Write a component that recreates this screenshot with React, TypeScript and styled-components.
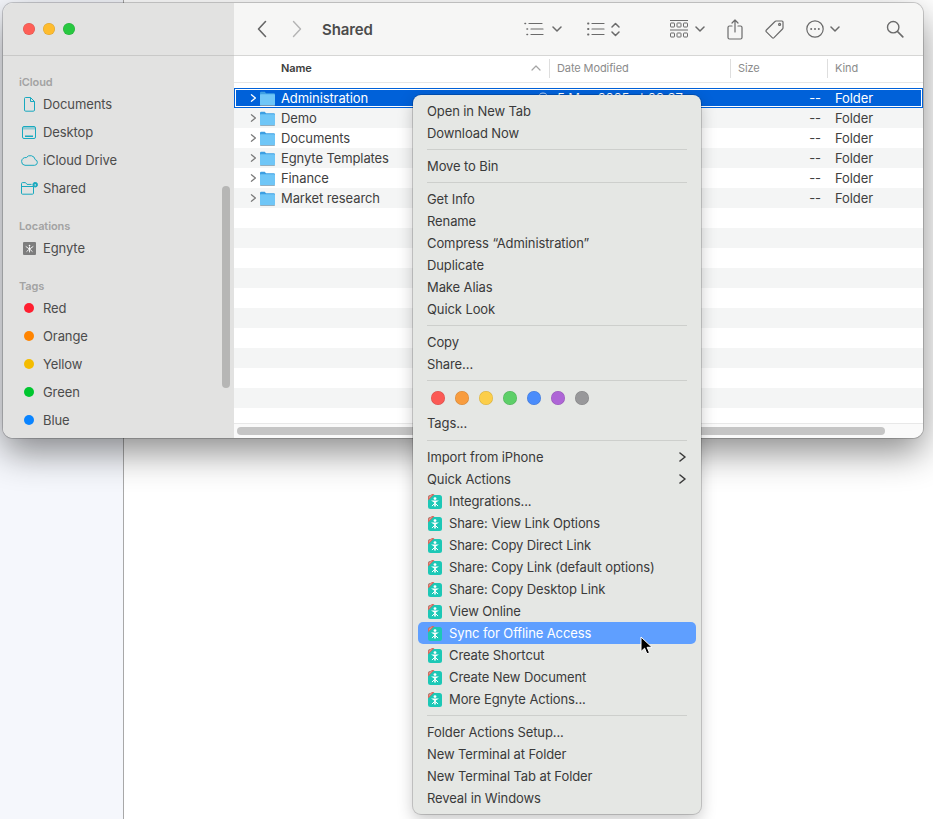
import React from 'react'
import { createGlobalStyle, styled } from 'styled-components'

const FONT = `Inter, "Liberation Sans", Arial, sans-serif`

const GlobalStyle = createGlobalStyle`
  html, body {
    margin: 0;
    padding: 0;
    background: #fff;
    font-family: ${FONT};
    letter-spacing: -0.1px;
    -webkit-font-smoothing: antialiased;
  }
  * { box-sizing: border-box; }
`

const Page = styled.div`
  position: relative;
  display: flex;
  width: 933px;
  height: 819px;
  overflow: hidden;
  background: #fff;
`

const BackPane = styled.div`
  width: 124px;
  height: 100%;
  border-right: 1px solid #a8a8a8;
  background: #f5f7fc;
`

const Window = styled.div`
  position: absolute;
  top: 3px;
  left: 3px;
  display: flex;
  width: 920px;
  height: 435px;
  overflow: hidden;
  border-radius: 10px;
  background: #fff;
  box-shadow: 0 0 0 1px rgba(0, 0, 0, 0.18), 0 14px 36px rgba(0, 0, 0, 0.46);
`

const Sidebar = styled.aside`
  position: relative;
  flex: 0 0 231px;
  overflow: hidden;
  background: #e2e2e1;
`

const TitleBar = styled.div`
  display: flex;
  align-items: center;
  gap: 8px;
  height: 53px;
  padding-left: 20px;
  border-bottom: 1px solid #c9c9c8;
`

const Light = styled.span<{ $color: string }>`
  width: 12px;
  height: 12px;
  border-radius: 50%;
  background: ${(props) => props.$color};
  box-shadow: inset 0 0 0 0.5px rgba(0, 0, 0, 0.15);
`

const SideContent = styled.div`
  padding-top: 18px;
`

const SideLabel = styled.div`
  height: 16px;
  margin-top: 16px;
  padding-left: 16px;
  color: #a3a3a3;
  font-size: 11px;
  font-weight: 600;
  line-height: 16px;

  &:first-child {
    margin-top: 0;
  }
`

const SideRow = styled.div`
  display: flex;
  align-items: center;
  height: 28px;
  color: #4c4c4c;
  font-size: 13px;
`

const SideIcon = styled.span`
  display: flex;
  flex: 0 0 40px;
  justify-content: center;
  padding-left: 12px;
`

const TagDot = styled.span<{ $color: string }>`
  width: 10px;
  height: 10px;
  border-radius: 50%;
  background: ${(props) => props.$color};
`

const SideScroll = styled.div`
  position: absolute;
  top: 183px;
  left: 219px;
  width: 8px;
  height: 202px;
  border-radius: 4px;
  background: #b6b6b5;
`

const Main = styled.main`
  display: flex;
  flex: 1;
  flex-direction: column;
  min-width: 0;
`

const Toolbar = styled.div`
  display: flex;
  align-items: center;
  flex: 0 0 53px;
  padding: 0 19px 0 23px;
  border-bottom: 1px solid #d6d6d5;
  background: #f6f6f5;
`

const NavButton = styled.span<{ $ml?: number }>`
  display: flex;
  margin-left: ${(props) => props.$ml ?? 0}px;
`

const Title = styled.div`
  flex: 1;
  margin-left: 20px;
  color: #4c4c4c;
  font-size: 15px;
  font-weight: 600;
`

const Tool = styled.span<{ $ml: number; $gap?: number }>`
  display: flex;
  align-items: center;
  gap: ${(props) => props.$gap ?? 7}px;
  margin-left: ${(props) => props.$ml}px;
`

const HeaderRow = styled.div`
  display: grid;
  grid-template-columns: 315px 181px 97px 1fr;
  flex: 0 0 27px;
  border-bottom: 1px solid #e6e6e6;
  background: #fff;
`

const HeaderCell = styled.div<{ $main?: boolean }>`
  display: flex;
  align-items: center;
  justify-content: space-between;
  height: 19px;
  margin-top: 3px;
  padding: ${(props) => (props.$main ? '0 8px 2px 47px' : '0 0 2px 7px')};
  border-left: ${(props) => (props.$main ? 'none' : '1px solid #dedede')};
  color: ${(props) => (props.$main ? '#3d3d3d' : '#8b8b8b')};
  font-size: 11px;
  font-weight: ${(props) => (props.$main ? 600 : 400)};
`

const Rows = styled.div`
  flex: 1;
  min-height: 0;
  overflow: hidden;
  padding-top: 5px;
`

const Row = styled.div<{ $selected?: boolean; $striped?: boolean }>`
  display: grid;
  grid-template-columns: 315px 181px 97px 1fr;
  align-items: center;
  height: 20px;
  background: ${(props) => (props.$selected ? '#0061d9' : props.$striped ? '#f4f5f5' : '#fff')};
  box-shadow: ${(props) => (props.$selected ? 'inset 0 0 0 1px #0061d9, inset 0 0 0 2px #fff' : 'none')};
  color: ${(props) => (props.$selected ? '#fff' : '#3f3f3f')};
  font-size: 13px;
`

const NameCell = styled.div`
  display: flex;
  align-items: center;
  gap: 3px;
  padding-left: 15px;
`

const RowName = styled.span`
  flex: 1;
  margin-left: 3px;
`

const DateCell = styled.div`
  padding-left: 8px;
  white-space: nowrap;
`

const SizeCell = styled.div`
  padding-right: 6px;
  text-align: right;
`

const KindCell = styled.div`
  padding-left: 8px;
`

const ScrollTrack = styled.div`
  flex: 0 0 14px;
  padding: 3px;
  border-top: 1px solid #e8e8e8;
  background: #fafafa;
`

const ScrollThumb = styled.div`
  width: 648px;
  height: 8px;
  border-radius: 4px;
  background: #c5c5c5;
`

const Menu = styled.div`
  position: absolute;
  top: 95px;
  left: 413px;
  width: 288px;
  height: 719px;
  padding: 5px 0;
  border-radius: 8px;
  background: #e5e7e4;
  box-shadow: 0 0 0 1px rgba(0, 0, 0, 0.17), 0 6px 16px rgba(0, 0, 0, 0.22);
`

const MenuRow = styled.div<{ $active?: boolean }>`
  display: flex;
  align-items: center;
  height: 22px;
  margin: 0 5px;
  padding: 0 9px;
  border-radius: 5px;
  background: ${(props) => (props.$active ? '#5f9fff' : 'transparent')};
  color: ${(props) => (props.$active ? '#fff' : '#3a3a3a')};
  font-size: 13px;
`

const MenuText = styled.span`
  flex: 1;
  white-space: nowrap;
`

const MenuIcon = styled.span`
  display: flex;
  flex: 0 0 22px;
  padding-left: 1px;
`

const Separator = styled.div<{ $wide?: boolean }>`
  height: 1px;
  margin: ${(props) => (props.$wide ? '6px' : '5px')} 14px 5px;
  background: #cdcfcc;
`

const ColorRow = styled.div`
  display: flex;
  align-items: center;
  gap: 10px;
  height: 26px;
  padding: 0 0 2px 18px;
`

const ColorDot = styled.span<{ $color: string }>`
  width: 14px;
  height: 14px;
  border-radius: 50%;
  background: ${(props) => props.$color};
  box-shadow: inset 0 0 0 0.5px rgba(0, 0, 0, 0.15);
`

const Cursor = styled.svg`
  position: absolute;
  top: 636px;
  left: 640px;
`

const GLYPH = '#6b6b6b'
const TEAL = '#19a9bf'

const Chevron: React.FC<{ dir: 'left' | 'right' | 'down' | 'up'; color?: string; size?: number; width?: number }> = ({
  dir,
  color = GLYPH,
  size = 10,
  width = 1.5,
}) => {
  const paths = {
    left: 'M7 1 2 5l5 4',
    right: 'M3 1l5 4-5 4',
    down: 'M1 3l4 4 4-4',
    up: 'M1 7l4-4 4 4',
  }
  return (
    <svg width={size} height={size} viewBox="0 0 10 10" fill="none">
      <path d={paths[dir]} stroke={color} strokeWidth={width} strokeLinecap="round" strokeLinejoin="round" />
    </svg>
  )
}

const BackIcon: React.FC<{ color: string }> = ({ color }) => (
  <svg width="10" height="18" viewBox="0 0 10 18" fill="none">
    <path d="M8.5 1.5 1.5 9l7 7.5" stroke={color} strokeWidth="1.6" strokeLinecap="round" strokeLinejoin="round" />
  </svg>
)

const ForwardIcon: React.FC<{ color: string }> = ({ color }) => (
  <svg width="10" height="18" viewBox="0 0 10 18" fill="none">
    <path d="M1.5 1.5 8.5 9l-7 7.5" stroke={color} strokeWidth="1.4" strokeLinecap="round" strokeLinejoin="round" />
  </svg>
)

const GroupListIcon = () => (
  <svg width="20" height="14" viewBox="0 0 20 14" fill="none" stroke={GLYPH} strokeLinecap="round">
    <path d="M5 1.5h13M7 7h12M7 12.5h12" strokeWidth="1.2" />
    <path d="M1 1.5h.5M3 7h.5M3 12.5h.5" strokeWidth="1.6" />
  </svg>
)

const ListIcon = () => (
  <svg width="18" height="14" viewBox="0 0 18 14" fill="none" stroke={GLYPH} strokeLinecap="round">
    <path d="M5 1.5h12M5 7h12M5 12.5h12" strokeWidth="1.2" />
    <path d="M1 1.5h.5M1 7h.5M1 12.5h.5" strokeWidth="1.8" />
  </svg>
)

const UpDownIcon = () => (
  <svg width="9" height="15" viewBox="0 0 9 15" fill="none" stroke={GLYPH} strokeWidth="1.5" strokeLinecap="round" strokeLinejoin="round">
    <path d="M1 5l3.5-3.5L8 5M1 10l3.5 3.5L8 10" />
  </svg>
)

const GalleryIcon = () => (
  <svg width="18" height="18" viewBox="0 0 18 18" fill="none" stroke={GLYPH} strokeWidth="1">
    <path d="M0 .5h18M0 10h18" />
    <rect x=".5" y="3" width="4" height="4" rx=".5" />
    <rect x="7" y="3" width="4" height="4" rx=".5" />
    <rect x="13.5" y="3" width="4" height="4" rx=".5" />
    <rect x=".5" y="13" width="4" height="4" rx=".5" />
    <rect x="7" y="13" width="4" height="4" rx=".5" />
    <rect x="13.5" y="13" width="4" height="4" rx=".5" />
  </svg>
)

const ShareIcon = () => (
  <svg width="16" height="21" viewBox="0 0 16 21" fill="none" stroke={GLYPH} strokeWidth="1.2" strokeLinecap="round" strokeLinejoin="round">
    <path d="M5 7H2.5A1.5 1.5 0 0 0 1 8.5v10A1.5 1.5 0 0 0 2.5 20h11a1.5 1.5 0 0 0 1.5-1.5v-10A1.5 1.5 0 0 0 13.5 7H11" />
    <path d="M8 13V1.2M5 4l3-3 3 3" />
  </svg>
)

const TagIcon = () => (
  <svg width="20" height="20" viewBox="0 0 20 20" fill="none" stroke={GLYPH} strokeWidth="1.2" strokeLinejoin="round">
    <path d="M11 2h6a1 1 0 0 1 1 1v6a1.5 1.5 0 0 1-.5 1L9 18.6a1.3 1.3 0 0 1-1.8 0L1.4 12.8a1.3 1.3 0 0 1 0-1.8L10 2.5A1.5 1.5 0 0 1 11 2Z" />
    <circle cx="14.6" cy="5.4" r="1" />
  </svg>
)

const MoreIcon = () => (
  <svg width="18" height="18" viewBox="0 0 18 18" fill="none">
    <circle cx="9" cy="9" r="8.2" stroke={GLYPH} strokeWidth="1.2" />
    <circle cx="5.2" cy="9" r="1" fill={GLYPH} />
    <circle cx="9" cy="9" r="1" fill={GLYPH} />
    <circle cx="12.8" cy="9" r="1" fill={GLYPH} />
  </svg>
)

const SearchIcon = () => (
  <svg width="18" height="18" viewBox="0 0 18 18" fill="none" stroke={GLYPH} strokeWidth="1.4" strokeLinecap="round">
    <circle cx="7.2" cy="7.2" r="5.7" />
    <path d="M11.5 11.5 16.8 16.8" strokeWidth="1.7" />
  </svg>
)

const DocIcon = () => (
  <svg width="11" height="15" viewBox="0 0 11 15" fill="none" stroke={TEAL} strokeWidth="1" strokeLinejoin="round">
    <path d="M1.5.5h5l4 4v8.5a1.2 1.2 0 0 1-1.2 1.2H1.7A1.2 1.2 0 0 1 .5 13V1.5a1 1 0 0 1 1-1Z" />
    <path d="M6.5.5v4h4" />
  </svg>
)

const DesktopIcon = () => (
  <svg width="14" height="13" viewBox="0 0 14 13" fill="none">
    <rect x=".5" y=".5" width="13" height="12" rx="1.5" stroke={TEAL} />
    <path d="M1 1h12v2.5H1z" fill={TEAL} opacity=".4" />
    <path d="M3 9.5h8V11H3z" fill={TEAL} />
  </svg>
)

const CloudIcon = () => (
  <svg width="17" height="12" viewBox="0 0 17 12" fill="none" stroke={TEAL} strokeWidth="1" strokeLinejoin="round">
    <path d="M4 11.3h9.6a2.9 2.9 0 0 0 .6-5.7A5 5 0 0 0 5.3 3.6 3.9 3.9 0 0 0 .6 7.5 3.8 3.8 0 0 0 4 11.3Z" />
  </svg>
)

const SharedIcon = () => (
  <svg width="17" height="13" viewBox="0 0 17 13" fill="none" stroke={TEAL} strokeWidth="1" strokeLinejoin="round">
    <path d="M.5 4v7.2a1 1 0 0 0 1 1h10a1 1 0 0 0 1-1V4.5H.5Zm0 0V1.6a1 1 0 0 1 1-1h3l1.5 1.8h4.5" />
    <circle cx="14.2" cy="2.7" r="2.3" fill={TEAL} />
    <path d="M14.2 2v1.8" stroke="#e2e2e1" />
  </svg>
)

const EgnyteMark = () => (
  <svg width="13" height="13" viewBox="0 0 13 13">
    <rect width="13" height="13" rx="1" fill="#7d7d7d" />
    <circle cx="6.5" cy="3.6" r=".8" fill="#fff" />
    <path d="M6.5 5v5M3 4.6l2.8 2M10 4.6 7.2 6.6M3.8 9.4 6 7.4M9.2 9.4 7 7.4" stroke="#fff" strokeWidth=".9" strokeLinecap="round" />
  </svg>
)

const FolderIcon = () => (
  <svg width="15" height="15" viewBox="0 0 15 15">
    <path d="M0 2a1.2 1.2 0 0 1 1.2-1.2h3.6L6 2.2h7.8A1.2 1.2 0 0 1 15 3.4v2H0Z" fill="#3d9fe2" />
    <path d="M0 4a.8.8 0 0 1 .8-.8h13.4a.8.8 0 0 1 .8.8v9.4a1 1 0 0 1-1 1H1a1 1 0 0 1-1-1Z" fill="#6fc6f7" />
    <path d="M0 14h15v.2a.8.8 0 0 1-.8.8H.8a.8.8 0 0 1-.8-.8Z" fill="#8a9aa5" opacity=".7" />
  </svg>
)

const EgnyteBadge = () => (
  <svg width="14" height="15" viewBox="0 0 14 15">
    <rect y="1" width="14" height="14" rx="2.5" fill="#1cc8b6" />
    <path d="M0 6V3.5A2.5 2.5 0 0 1 2.5 1L4 0h2.5L0 6.5Z" fill="#d9695f" />
    <path d="M1 3.6 3.6 1.2" stroke="#f3d6d0" strokeWidth=".6" />
    <circle cx="7" cy="4.6" r="1.4" fill="#fff" />
    <path d="M3 6.6h8L7.8 8.6v4H6.2v-4Z" fill="#fff" />
    <path d="M4.2 11.8 6.4 9.6M9.8 11.8 7.6 9.6" stroke="#fff" strokeWidth="1" strokeLinecap="round" />
  </svg>
)

const StatusIcon = () => (
  <svg width="12" height="12" viewBox="0 0 12 12" fill="none" stroke="#b8cff2" strokeWidth="1">
    <circle cx="6" cy="6" r="5" />
  </svg>
)

const ICLOUD: [string, React.ReactNode][] = [
  ['Documents', <DocIcon key="d" />],
  ['Desktop', <DesktopIcon key="k" />],
  ['iCloud Drive', <CloudIcon key="c" />],
  ['Shared', <SharedIcon key="s" />],
]

const TAGS: [string, string][] = [
  ['Red', '#ff1f30'],
  ['Orange', '#ff8400'],
  ['Yellow', '#f4bc00'],
  ['Green', '#00c62f'],
  ['Blue', '#0a84ff'],
]

const FOLDERS = ['Administration', 'Demo', 'Documents', 'Egnyte Templates', 'Finance', 'Market research']

const DOTS = ['#fb5a55', '#f89c3e', '#fcce49', '#5dcf68', '#4a8cfb', '#ae65d6', '#98989a']

type MenuEntry =
  | { kind: 'sep'; wide?: boolean }
  | { kind: 'colors' }
  | { kind: 'item'; label: string; egnyte?: boolean; sub?: boolean; active?: boolean }

const item = (label: string): MenuEntry => ({ kind: 'item', label })
const egnyte = (label: string, active = false): MenuEntry => ({ kind: 'item', label, egnyte: true, active })
const sep: MenuEntry = { kind: 'sep' }

const MENU: MenuEntry[] = [
  item('Open in New Tab'),
  item('Download Now'),
  sep,
  item('Move to Bin'),
  sep,
  item('Get Info'),
  item('Rename'),
  item('Compress “Administration”'),
  item('Duplicate'),
  item('Make Alias'),
  item('Quick Look'),
  sep,
  item('Copy'),
  item('Share...'),
  sep,
  { kind: 'colors' },
  item('Tags...'),
  { kind: 'sep', wide: true },
  { kind: 'item', label: 'Import from iPhone', sub: true },
  { kind: 'item', label: 'Quick Actions', sub: true },
  egnyte('Integrations...'),
  egnyte('Share: View Link Options'),
  egnyte('Share: Copy Direct Link'),
  egnyte('Share: Copy Link (default options)'),
  egnyte('Share: Copy Desktop Link'),
  egnyte('View Online'),
  egnyte('Sync for Offline Access', true),
  egnyte('Create Shortcut'),
  egnyte('Create New Document'),
  egnyte('More Egnyte Actions...'),
  sep,
  item('Folder Actions Setup...'),
  item('New Terminal at Folder'),
  item('New Terminal Tab at Folder'),
  item('Reveal in Windows'),
]

export default function App() {
  return (
    <Page>
      <GlobalStyle />
      <BackPane />
      <Window>
        <Sidebar>
          <TitleBar>
            <Light $color="#fe5f57" />
            <Light $color="#febc2e" />
            <Light $color="#28c840" />
          </TitleBar>
          <SideContent>
            <SideLabel>iCloud</SideLabel>
            {ICLOUD.map(([label, icon]) => (
              <SideRow key={label}>
                <SideIcon>{icon}</SideIcon>
                {label}
              </SideRow>
            ))}
            <SideLabel>Locations</SideLabel>
            <SideRow>
              <SideIcon>
                <EgnyteMark />
              </SideIcon>
              Egnyte
            </SideRow>
            <SideLabel>Tags</SideLabel>
            {TAGS.map(([label, color]) => (
              <SideRow key={label}>
                <SideIcon>
                  <TagDot $color={color} />
                </SideIcon>
                {label}
              </SideRow>
            ))}
          </SideContent>
          <SideScroll />
        </Sidebar>
        <Main>
          <Toolbar>
            <NavButton>
              <BackIcon color="#666" />
            </NavButton>
            <NavButton $ml={25}>
              <ForwardIcon color="#b4b4b4" />
            </NavButton>
            <Title>Shared</Title>
            <Tool $ml={0} $gap={8}>
              <GroupListIcon />
              <Chevron dir="down" />
            </Tool>
            <Tool $ml={25} $gap={6}>
              <ListIcon />
              <UpDownIcon />
            </Tool>
            <Tool $ml={50}>
              <GalleryIcon />
              <Chevron dir="down" />
            </Tool>
            <Tool $ml={22}>
              <ShareIcon />
            </Tool>
            <Tool $ml={22}>
              <TagIcon />
            </Tool>
            <Tool $ml={21} $gap={6}>
              <MoreIcon />
              <Chevron dir="down" />
            </Tool>
            <Tool $ml={46}>
              <SearchIcon />
            </Tool>
          </Toolbar>
          <HeaderRow>
            <HeaderCell $main>
              Name
              <Chevron dir="up" color="#a5a5a5" width={1.2} />
            </HeaderCell>
            <HeaderCell>Date Modified</HeaderCell>
            <HeaderCell>Size</HeaderCell>
            <HeaderCell>Kind</HeaderCell>
          </HeaderRow>
          <Rows>
            {Array.from({ length: 17 }, (_, i) => {
              const name = FOLDERS[i]
              return (
                <Row key={i} $selected={i === 0} $striped={i % 2 === 1}>
                  {name ? (
                    <>
                      <NameCell>
                        <Chevron dir="right" color={i === 0 ? '#fff' : '#7a7a7a'} size={8} width={1.6} />
                        <FolderIcon />
                        <RowName>{name}</RowName>
                        {i === 0 && <StatusIcon />}
                      </NameCell>
                      <DateCell>{i === 0 ? '5 May 2025 at 09:37' : ''}</DateCell>
                      <SizeCell>--</SizeCell>
                      <KindCell>Folder</KindCell>
                    </>
                  ) : null}
                </Row>
              )
            })}
          </Rows>
          <ScrollTrack>
            <ScrollThumb />
          </ScrollTrack>
        </Main>
      </Window>
      <Menu>
        {MENU.map((entry, i) => {
          if (entry.kind === 'sep') return <Separator key={i} $wide={entry.wide} />
          if (entry.kind === 'colors') {
            return (
              <ColorRow key={i}>
                {DOTS.map((c) => (
                  <ColorDot key={c} $color={c} />
                ))}
              </ColorRow>
            )
          }
          return (
            <MenuRow key={i} $active={entry.active}>
              {entry.egnyte && (
                <MenuIcon>
                  <EgnyteBadge />
                </MenuIcon>
              )}
              <MenuText>{entry.label}</MenuText>
              {entry.sub && <Chevron dir="right" color="#3a3a3a" width={1.6} />}
            </MenuRow>
          )
        })}
      </Menu>
      <Cursor width="14" height="20" viewBox="0 0 14 20">
        <path d="M1 1v14.5l3.6-3.3 2.3 5.6 2.6-1.1-2.4-5.4h4.9Z" fill="#000" stroke="#fff" strokeWidth="1" />
      </Cursor>
    </Page>
  )
}
